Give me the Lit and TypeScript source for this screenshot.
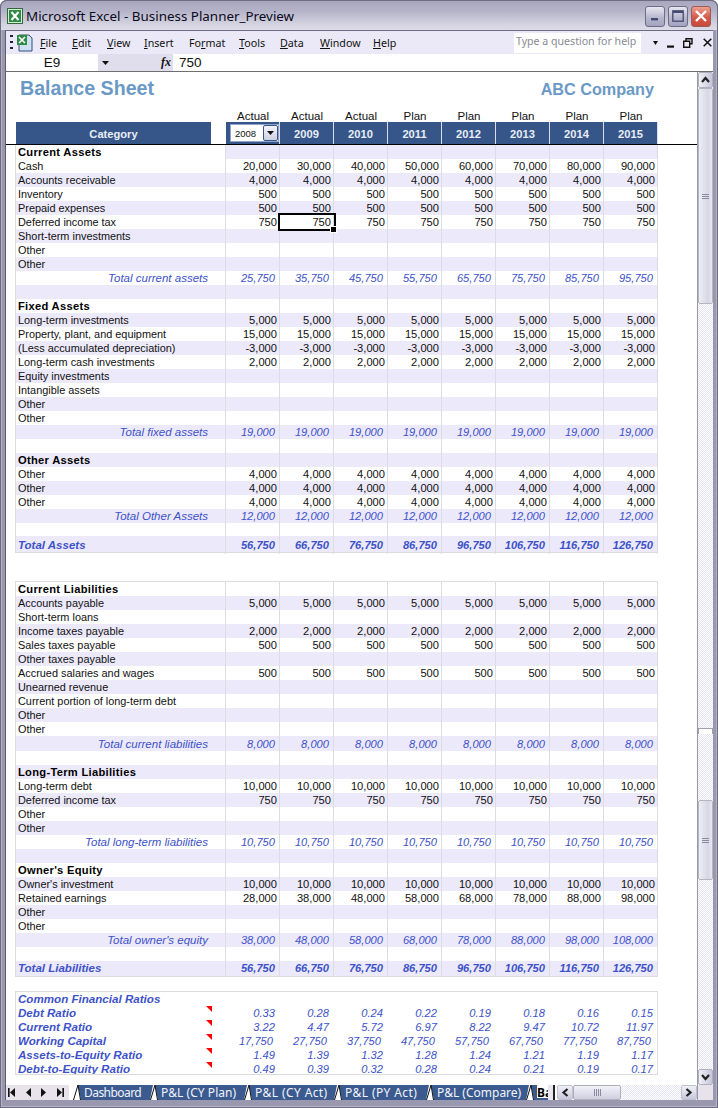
import { LitElement, html, css, svg } from "lit";
import { customElement } from "lit/decorators.js";

type Row = { l?: string; k: string; v?: (string | number)[]; tall?: string };
const rep = (s: string) => Array(8).fill(s);
const seq = (a: number, step = 10000) =>
  Array.from({ length: 8 }, (_, i) => (a + i * step).toLocaleString("en-US"));

const item = (l: string, v?: string[]): Row => ({ l, k: "item", v });
const head = (l: string): Row => ({ l, k: "head" });
const total = (l: string, v: string[], tall = ""): Row => ({ l, k: "total", v, tall });
const blank = (tall = ""): Row => ({ k: "blank", tall });
const grand = (l: string, v: string[], tall: string): Row => ({ l, k: "grand", v, tall });

const assets: Row[] = [
  head("Current Assets"),
  item("Cash", seq(20000)),
  item("Accounts receivable", rep("4,000")),
  item("Inventory", rep("500")),
  item("Prepaid expenses", rep("500")),
  item("Deferred income tax", rep("750")),
  item("Short-term investments"),
  item("Other"),
  item("Other"),
  total("Total current assets", seq(25750)),
  blank(),
  head("Fixed Assets"),
  item("Long-term investments", rep("5,000")),
  item("Property, plant, and equipment", rep("15,000")),
  item("(Less accumulated depreciation)", rep("-3,000")),
  item("Long-term cash investments", rep("2,000")),
  item("Equity investments"),
  item("Intangible assets"),
  item("Other"),
  item("Other"),
  total("Total fixed assets", rep("19,000")),
  blank(),
  head("Other Assets"),
  item("Other", rep("4,000")),
  item("Other", rep("4,000")),
  item("Other", rep("4,000")),
  total("Total Other Assets", rep("12,000")),
  blank("h13"),
  grand("Total Assets", seq(56750), "h16"),
];
const liabilities: Row[] = [
  head("Current Liabilities"),
  item("Accounts payable", rep("5,000")),
  item("Short-term loans"),
  item("Income taxes payable", rep("2,000")),
  item("Sales taxes payable", rep("500")),
  item("Other taxes payable"),
  item("Accrued salaries and wages", rep("500")),
  item("Unearned revenue"),
  item("Current portion of long-term debt"),
  item("Other"),
  item("Other"),
  total("Total current liabilities", rep("8,000"), "h15"),
  blank(),
  head("Long-Term Liabilities"),
  item("Long-term debt", rep("10,000")),
  item("Deferred income tax", rep("750")),
  item("Other"),
  item("Other"),
  total("Total long-term liabilities", rep("10,750")),
  blank(),
  head("Owner's Equity"),
  item("Owner's investment", rep("10,000")),
  item("Retained earnings", seq(28000)),
  item("Other"),
  item("Other"),
  total("Total owner's equity", seq(38000)),
  blank(),
  grand("Total Liabilities", seq(56750), "h15"),
];
const ratios: { l: string; v: string[]; wide?: boolean }[] = [
  { l: "Debt Ratio", v: ["0.33", "0.28", "0.24", "0.22", "0.19", "0.18", "0.16", "0.15"] },
  { l: "Current Ratio", v: ["3.22", "4.47", "5.72", "6.97", "8.22", "9.47", "10.72", "11.97"] },
  { l: "Working Capital", v: seq(17750), wide: true },
  { l: "Assets-to-Equity Ratio", v: ["1.49", "1.39", "1.32", "1.28", "1.24", "1.21", "1.19", "1.17"] },
  { l: "Debt-to-Equity Ratio", v: ["0.49", "0.39", "0.32", "0.28", "0.24", "0.21", "0.19", "0.17"] },
];
const kinds = ["Actual", "Actual", "Actual", "Plan", "Plan", "Plan", "Plan", "Plan"];
const years = [2009, 2010, 2011, 2012, 2013, 2014, 2015];
const tabs = [
  { t: "Dashboard", ls: -0.55 },
  { t: "P&L (CY Plan)", ls: 0.05 },
  { t: "P&L (CY Act)", ls: 0.4 },
  { t: "P&L (PY Act)", ls: 0.4 },
  { t: "P&L (Compare)", ls: 0 },
];

const xl = svg`<rect x=".5" y=".5" width="15" height="15" fill="#dcebd8" stroke="#2f6b3a"/><rect x="2" y="2" width="12" height="12" fill="#2e8b46"/><path d="M4.5 4l7 8M11.5 4l-7 8" stroke="#fff" stroke-width="2"/>`;

@customElement("app-root")
export class AppRoot extends LitElement {
  static styles = css`
    :host { display: block; width: 718px; height: 1108px; overflow: hidden; font-family: "Liberation Sans", Arial, sans-serif; background: #fff; }
    * { box-sizing: border-box; }
    svg { display: block; flex: none; }
    .win { width: 718px; height: 1108px; display: flex; flex-direction: column; background: #9a98ae; border-radius: 7px 7px 0 0; box-shadow: inset 0 0 0 1px #6d6c82, inset 0 0 0 2px #b4b3c4; }
    .title { height: 30px; flex: none; display: flex; align-items: center; padding: 1px 6px 0 6px; gap: 3px; background: linear-gradient(#a9a7bf 0, #b5b3c8 35%, #d4d3e0 80%, #dcdbe6 100%); border-radius: 7px 7px 0 0; border: 1px solid #6d6c82; border-bottom: 0; }
    .title-text { flex: 1; font: 13.4px "Noto Sans", sans-serif; color: #0a0a20; white-space: nowrap; }
    .wbtns { display: flex; gap: 3px; }
    .wbtn { width: 20px; height: 21px; border: 1px solid #6d6c88; border-radius: 3px; background: linear-gradient(#e8e8f0, #b4b4cc 60%, #a4a4c0); display: flex; align-items: center; justify-content: center; }
    .wbtn.close { background: linear-gradient(#eda08f, #d55a48 55%, #c54a3a); border-color: #9c5a5a; }
    .client { flex: 1; margin: 0 5px 8px 5px; display: flex; flex-direction: column; border-top: 1px solid #6d6c82; border-left: 1px solid #5d5c70; min-height: 0; }
    .menu { height: 23px; flex: none; display: flex; align-items: center; background: #ebe9f7; }
    .grip { width: 3px; height: 15px; margin-left: 4px; background: repeating-linear-gradient(#223 0 2px, transparent 2px 6px); }
    .menu-ic { margin: 0 6px 0 3px; }
    .menu-items { display: grid; grid-template-columns: 32px 35px 37px 45px 50px 41px 40px 53px 141px; font: 10.7px "Noto Sans", sans-serif; color: #111; }
    .menu-items u { text-underline-offset: 1px; }
    .help { width: 127px; height: 20px; background: #fff; font: 10.6px/15px "Noto Sans", sans-serif; color: #8a8a92; padding: 1px 2px; white-space: nowrap; }
    .dd { margin-left: 12px; }
    .mn { margin-left: 9px; }
    .rs { margin-left: 8px; }
    .cl { margin-left: 10px; }
    .formula { height: 17px; flex: none; display: grid; grid-template-columns: 92px 75px 1fr; background: #fff; font: 13px "Liberation Sans", sans-serif; color: #111; }
    .name { text-align: center; line-height: 17px; font-size: 13.5px; }
    .fbtn { background: #e0deec; display: flex; align-items: center; justify-content: space-between; padding: 0 2px 0 4px; }
    .fx { font: italic bold 12px "Liberation Serif", serif; }
    .fval { padding-left: 6px; line-height: 17px; font-size: 13.5px; }
    .body { flex: 1; display: flex; min-height: 0; border-top: 1px solid #6f6f6f; }
    .left { flex: 1; display: flex; flex-direction: column; min-width: 0; }
    .sheet { flex: 1; background: #fff; overflow: hidden; font-size: 11.15px; color: #111; }
    .top { height: 36px; display: grid; grid-template-columns: 1fr auto; align-items: center; width: 648px; margin-left: 10px; padding-bottom: 3px; color: #6b99c6; font-weight: 700; }
    .h1 { font-size: 19.6px; padding-left: 4px; }
    .co { font-size: 16.2px; padding-right: 10px; padding-top: 1px; }
    .grid { display: grid; grid-template-columns: 210px repeat(8, 54px); width: 642px; margin-left: 10px; }
    .labels { height: 14px; line-height: 16px; text-align: center; font-size: 11.5px; }
    .hdr { border-bottom: 1px solid #000; height: 23px; }
    .hdr .grid { height: 22px; }
    .cat, .yr { background: #36568a; color: #e9edf6; font-weight: 700; display: flex; align-items: center; justify-content: center; padding-top: 2px; }
    .cat { margin-right: 15px; }
    .yr { border-right: 1px solid #dcdcec; }
    .yr0 { background: #36568a; padding: 2px 0 2px 4px; border-right: 1px solid #dcdcec; display: flex; align-items: center; }
    .sel { width: 49px; height: 18px; background: #fff; border: 1px solid #8ea4c8; display: flex; align-items: center; justify-content: space-between; font-size: 9.5px; color: #111; font-weight: 400; padding-left: 4px; }
    .selb { width: 15px; height: 16px; background: linear-gradient(#f4f4fa, #cdd0e2); border: 1px solid #36568a; border-radius: 2px; display: flex; align-items: center; justify-content: center; }
    .block { margin-left: 9px; width: 643px; border-left: 1px solid #dcdcdc; }
    .block.lower { margin-top: 28px; border-top: 1px solid #dcdcdc; border-bottom: 1px solid #dcdcdc; }
    .block.ratios { margin-top: 14px; border: 1px solid #dcdcdc; height: 84px; overflow: hidden; }
    .block.upper { border-bottom: 1px solid #dcdcdc; }
    .r { display: grid; grid-template-columns: 210px repeat(8, 54px); height: 14px; line-height: 14px; white-space: nowrap; }
    .r.h13 { height: 13px; }
    .r.h15 { height: 15px; line-height: 15px; }
    .r.total.h15 { line-height: 16px; }
    .r.h16 { height: 16px; line-height: 18px; }
    .c { text-align: right; padding-right: 2px; border-right: 1px solid #dcdce4; position: relative; }
    .lab { padding-left: 2px; border-right: 1px solid #dcdce4; font-size: 10.9px; }
    .r.band { background: #ece9fb; }
    .r.first .lab { background: #fff; }
    .head .lab { font-weight: 700; color: #000; font-size: 11.15px; letter-spacing: 0.3px; }
    .total { color: #3d52c8; font-style: italic; }
    .total .lab { text-align: right; padding-right: 17px; font-size: 11.5px; }
    .total .c { padding-right: 4px; }
    .grand { color: #3d52c8; font-style: italic; font-weight: 700; }
    .grand .lab { font-size: 11.5px; }
    .grand .c { padding-right: 4px; }
    .cur { box-shadow: 0 0 0 2px #000; z-index: 1; }
    .cur::after { content: ""; position: absolute; right: -4px; bottom: -4px; width: 5px; height: 5px; background: #000; border: 1px solid #fff; }
    .ratio { color: #3d52c8; font-style: italic; }
    .ratio .lab { font-weight: 700; font-size: 11.6px; border: 0; position: relative; }
    .ratio .c { border: 0; padding-right: 5px; }
    .ratio .c.wide { padding-right: 7px; }
    .tri { position: absolute; right: 14px; top: 0; width: 6px; height: 6px; background: #f00; clip-path: polygon(0 0, 100% 0, 100% 100%); }
    .tabbar { height: 15px; flex: none; display: flex; background: #fff; }
    .nav { width: 63px; flex: none; background: #e8e2ea; display: flex; align-items: center; justify-content: space-between; padding: 0 5px 0 2px; }
    .tabs { width: 479px; flex: none; display: grid; grid-template-columns: 3px 77px 94px 90px 92px 100px 23px; overflow: hidden; font: 12px/15px "Noto Sans", sans-serif; }
    .tab { display: flex; color: #f2f4fa; white-space: nowrap; }
    .tab span { flex: 1; background: #3a5a90; height: 15px; overflow: hidden; }
    .tab.act span { background: #fff; color: #000; font-weight: 700; border-bottom: 2px solid #3a5a90; }
    .split { width: 7px; flex: none; background: #e8e6f2; border-right: 2px solid #222; margin-right: 2px; }
    .hs { flex: 1; display: flex; }
    .sb { width: 16px; height: 15px; flex: none; background: linear-gradient(#f0f0f8, #c8c8dc); border: 1px solid #c0c0cc; border-radius: 2px; display: flex; align-items: center; justify-content: center; }
    .htrack { flex: 1; background: repeating-conic-gradient(#e6e5f4 0 25%, #fff 0 50%) 0 0 / 2px 2px; }
    .hthumb { width: 48px; flex: none; background: linear-gradient(#f2f2fa, #cfcfe0); border: 1px solid #b0b0bc; border-radius: 2px; display: flex; align-items: center; justify-content: center; }
    .vs { width: 15px; flex: none; display: flex; flex-direction: column; background: #fff; margin-left: 1px; }
    .vcol { flex: 1; display: flex; flex-direction: column; min-height: 0; }
    .vb { height: 16px; flex: none; background: linear-gradient(90deg, #f0f0f8, #c6c6da); border: 1px solid #b0b0bc; border-radius: 2px; display: flex; align-items: center; justify-content: center; }
    .vtrack { background: repeating-conic-gradient(#e6e5f4 0 25%, #fff 0 50%) 0 0 / 2px 2px; flex: 1; }
    .vthumb { flex: none; background: linear-gradient(90deg, #eeeef8, #d6d6e6 70%, #e8e8f2); border: 1px solid #b4b4c0; border-radius: 2px; display: flex; align-items: center; justify-content: center; }
    .t1 { height: 216px; }
    .t2 { height: 80px; }
    .vsplit { height: 6px; flex: none; border: 1px solid #a0a0ac; border-bottom: 0; background: #fff; }
    .gap1 { flex: none; height: 424px; }
    .gap2 { flex: none; height: 66px; }
    .corner { height: 15px; flex: none; background: #e8e2ea; }
  `;

  private row(r: Row, i: number, cur = false) {
    const cls = `r ${r.k} ${i % 2 === 0 ? "" : "band"} ${r.tall ?? ""}`;
    return html`<div class=${cls}>
      <div class="lab">${r.l ?? ""}</div>
      ${Array.from({ length: 8 }, (_, j) => html`<div class="c ${cur && j === 1 ? "cur" : ""}">${r.v ? r.v[j] : ""}</div>`)}
    </div>`;
  }

  private sep(prev: boolean) {
    return html`<svg width="12" height="15" viewBox="0 0 12 15">
      ${prev ? svg`<path d="M0 0h4l-3 15H0z" fill="#3a5a90"/>` : ""}
      <path d="M6 0h6v15H9z" fill="#3a5a90"/>
      <path d="M1.5 15L6 0M6 0l2.5 15" fill="none" stroke="#111" stroke-width="1"/>
    </svg>`;
  }

  render() {
    const grip = svg`<path d="M0 .5h7M0 2.5h7M0 4.5h7" stroke="#8a8aa0"/>`;
    return html`<div class="win">
      <div class="title">
        <svg width="16" height="16" viewBox="0 0 16 16">${xl}</svg>
        <div class="title-text">Microsoft Excel - Business Planner_Preview</div>
        <div class="wbtns">
          <div class="wbtn"><svg width="10" height="10" viewBox="0 0 10 10"><rect x="1" y="7" width="7" height="2.4" fill="#444a70"/></svg></div>
          <div class="wbtn"><svg width="12" height="12" viewBox="0 0 12 12"><rect x=".8" y=".8" width="10.4" height="10.4" fill="none" stroke="#444a70" stroke-width="1.3"/><rect x="1" y="1" width="10" height="2" fill="#444a70"/></svg></div>
          <div class="wbtn close"><svg width="14" height="14" viewBox="0 0 14 14"><path d="M2 2l10 10M12 2L2 12" stroke="#fff" stroke-width="2.4"/></svg></div>
        </div>
      </div>
      <div class="client">
        <div class="menu">
          <div class="grip"></div>
          <svg class="menu-ic" width="18" height="18" viewBox="0 0 18 18"><path d="M3 1h10l3 3v13H3z" fill="#cfe0f2" stroke="#33507e"/><rect x="1" y="1" width="10" height="10" fill="#2e8b46"/><path d="M3 3l6 6M9 3L3 9" stroke="#fff" stroke-width="1.6"/></svg>
          <div class="menu-items">
            <div><u>F</u>ile</div><div><u>E</u>dit</div><div><u>V</u>iew</div><div><u>I</u>nsert</div><div>Fo<u>r</u>mat</div><div><u>T</u>ools</div><div><u>D</u>ata</div><div><u>W</u>indow</div><div><u>H</u>elp</div>
          </div>
          <div class="help">Type a question for help</div>
          <svg class="dd" width="5" height="4" viewBox="0 0 5 4"><path d="M0 0h5L2.5 4z" fill="#111"/></svg>
          <svg class="mn" width="8" height="12" viewBox="0 0 8 12"><rect x="0" y="8.5" width="7" height="2.2" fill="#111"/></svg>
          <svg class="rs" width="10" height="10" viewBox="0 0 10 10"><path d="M3 2.5V.7h6v5H7M.7 3.2h6v6h-6z" fill="none" stroke="#111" stroke-width="1.4"/></svg>
          <svg class="cl" width="9" height="9" viewBox="0 0 9 9"><path d="M.7.7l7.6 7.6M8.3.7L.7 8.3" stroke="#111" stroke-width="1.5"/></svg>
        </div>
        <div class="formula">
          <div class="name">E9</div>
          <div class="fbtn"><svg width="7" height="4" viewBox="0 0 7 4"><path d="M0 0h7L3.5 4z" fill="#111"/></svg><span class="fx">fx</span></div>
          <div class="fval">750</div>
        </div>
        <div class="body">
          <div class="left">
            <div class="sheet">
              <div class="top"><div class="h1">Balance Sheet</div><div class="co">ABC Company</div></div>
              <div class="grid labels"><div></div>${kinds.map((k) => html`<div>${k}</div>`)}</div>
              <div class="hdr"><div class="grid">
                <div class="cat">Category</div>
                <div class="yr0"><div class="sel">2008<div class="selb"><svg width="7" height="4" viewBox="0 0 7 4"><path d="M0 0h7L3.5 4z" fill="#111"/></svg></div></div></div>
                ${years.map((y) => html`<div class="yr">${y}</div>`)}
              </div></div>
              <div class="block upper">
                ${assets.map((r, i) =>
                  i === 0
                    ? html`<div class="r head band first"><div class="lab">${r.l}</div>${Array.from({ length: 8 }, () => html`<div class="c"></div>`)}</div>`
                    : this.row(r, i + 1, r.l === "Deferred income tax")
                )}
              </div>
              <div class="block lower">${liabilities.map((r, i) => this.row(r, i))}</div>
              <div class="block ratios">
                <div class="r ratio"><div class="lab">Common Financial Ratios</div></div>
                ${ratios.map((r) => html`<div class="r ratio"><div class="lab">${r.l}<span class="tri"></span></div>${r.v.map((v) => html`<div class="c ${r.wide ? "wide" : ""}">${v}</div>`)}</div>`)}
              </div>
            </div>
            <div class="tabbar">
              <div class="nav">
                <svg width="7" height="9" viewBox="0 0 7 9"><path d="M0 0h1.6v9H0zM7 0v9L2 4.5z" fill="#111"/></svg>
                <svg width="5" height="9" viewBox="0 0 5 9"><path d="M5 0v9L0 4.5z" fill="#111"/></svg>
                <svg width="5" height="9" viewBox="0 0 5 9"><path d="M0 0v9l5-4.5z" fill="#111"/></svg>
                <svg width="7" height="9" viewBox="0 0 7 9"><path d="M7 0H5.4v9H7zM0 0v9l5-4.5z" fill="#111"/></svg>
              </div>
              <div class="tabs">
                <div></div>
                ${tabs.map((t, i) => html`<div class="tab">${this.sep(i > 0)}<span style="letter-spacing:${t.ls}px">${t.t}</span></div>`)}
                <div class="tab act">${this.sep(true)}<span>Ba</span></div>
              </div>
              <div class="split"></div>
              <div class="hs">
                <div class="sb"><svg width="8" height="9" viewBox="0 0 8 9"><path d="M6.5 1L2.5 4.5 6.5 8" fill="none" stroke="#222" stroke-width="2.2"/></svg></div>
                <div class="hthumb"><svg width="7" height="7" viewBox="0 0 7 7"><path d="M.5 0v7M2.5 0v7M4.5 0v7M6.5 0v7" stroke="#8a8aa0"/></svg></div>
                <div class="htrack"></div>
                <div class="sb"><svg width="8" height="9" viewBox="0 0 8 9"><path d="M1.5 1l4 3.5L1.5 8" fill="none" stroke="#222" stroke-width="2.2"/></svg></div>
              </div>
            </div>
          </div>
          <div class="vs">
            <div class="vcol">
              <div class="vb"><svg width="9" height="8" viewBox="0 0 9 8"><path d="M1 6l3.5-4L8 6" fill="none" stroke="#222" stroke-width="2.2"/></svg></div>
              <div class="vthumb t1"><svg width="7" height="5" viewBox="0 0 7 5">${grip}</svg></div>
              <div class="vtrack gap1"></div>
              <div class="vsplit"></div>
              <div class="vtrack gap2"></div>
              <div class="vthumb t2"><svg width="7" height="5" viewBox="0 0 7 5">${grip}</svg></div>
              <div class="vtrack"></div>
              <div class="vb"><svg width="9" height="8" viewBox="0 0 9 8"><path d="M1 2l3.5 4L8 2" fill="none" stroke="#222" stroke-width="2.2"/></svg></div>
            </div>
            <div class="corner"></div>
          </div>
        </div>
      </div>
    </div>`;
  }
}
